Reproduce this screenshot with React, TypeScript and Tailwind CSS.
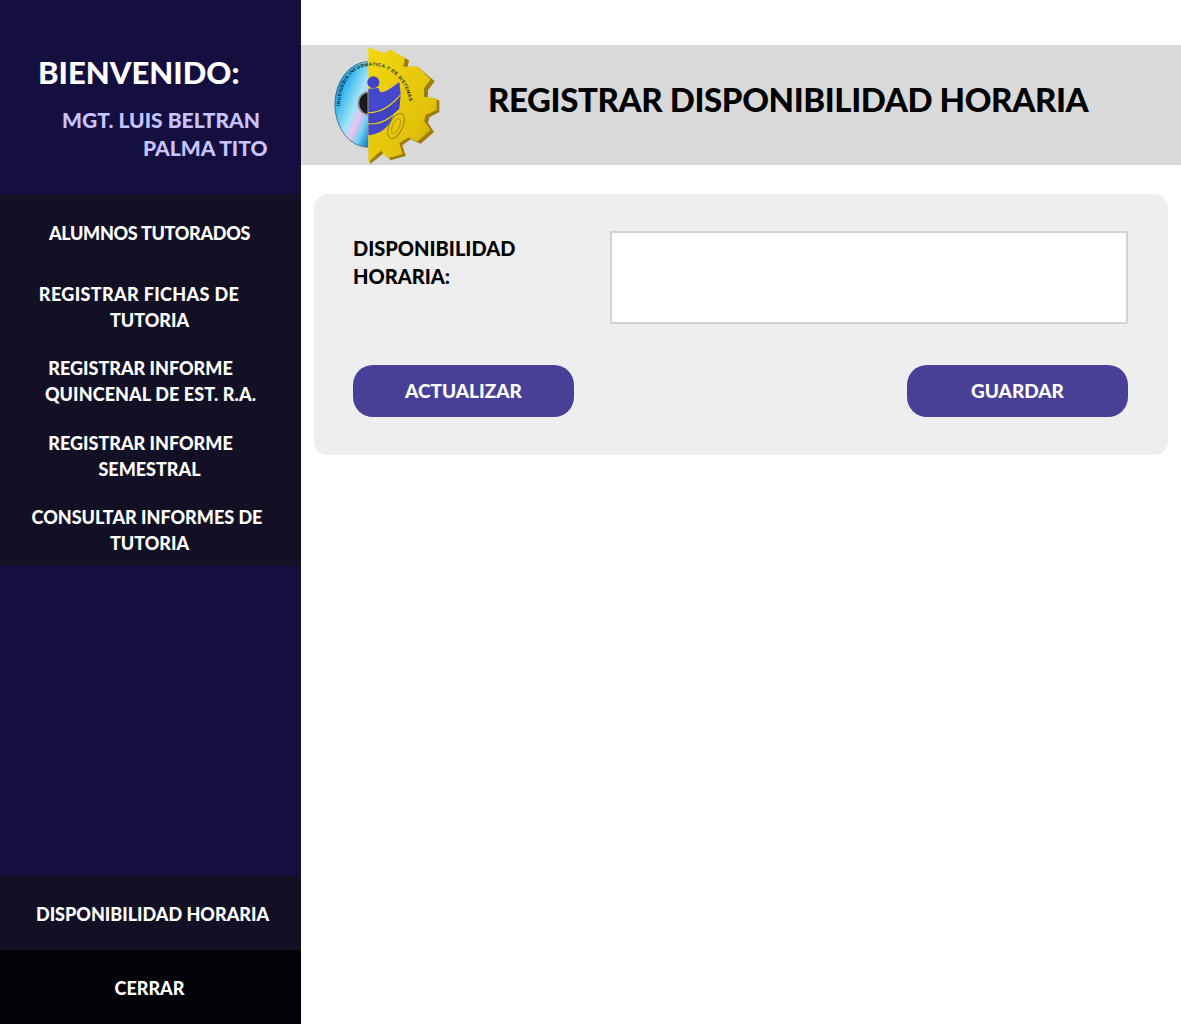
import React from 'react';

const menuItems = [
  { lines: [{ text: 'ALUMNOS TUTORADOS', cls: 'pr-[2px] tracking-[-0.3px]' }] },
  { lines: [{ text: 'REGISTRAR FICHAS DE', cls: 'pr-[23px] tracking-[0.35px]' }, { text: 'TUTORIA', cls: 'pr-[2px]' }] },
  { lines: [{ text: 'REGISTRAR INFORME', cls: 'pr-[20px]' }, { text: 'QUINCENAL DE EST. R.A.', cls: 'pr-0 tracking-[0.1px]' }] },
  { lines: [{ text: 'REGISTRAR INFORME', cls: 'pr-[20px]' }, { text: 'SEMESTRAL', cls: 'pr-[2px]' }] },
  { lines: [{ text: 'CONSULTAR INFORMES DE', cls: 'pr-[7px]' }, { text: 'TUTORIA', cls: 'pr-[2px]' }] },
];

const Logo = () => (
  <svg width="160" height="120" viewBox="0 45 480 360" className="shrink-0">
    <defs>
      <linearGradient id="cd" x1="0" y1="0" x2="0.9" y2="1">
        <stop offset="0" stopColor="#1566c0" />
        <stop offset="0.3" stopColor="#2fb4ea" />
        <stop offset="0.58" stopColor="#9fe4f8" />
        <stop offset="0.72" stopColor="#ecc0f0" />
        <stop offset="0.85" stopColor="#6fd0f2" />
        <stop offset="1" stopColor="#1f86d2" />
      </linearGradient>
      <linearGradient id="gear" x1="0" y1="0" x2="1" y2="1">
        <stop offset="0" stopColor="#f2d80e" />
        <stop offset="0.7" stopColor="#e2c20b" />
        <stop offset="1" stopColor="#c49c08" />
      </linearGradient>
      <path id="ring" d="M90 228 C94 150 130 110 185 107 C240 107 292 150 300 228" />
    </defs>
    {/* CD half */}
    <path d="M175 95 A100 128 0 0 0 175 352 Z" fill="url(#cd)" />
    <path d="M175 95 A100 128 0 0 0 175 352" fill="none" stroke="#24506e" strokeWidth="2" />
    <path d="M175 186 A30 34 0 0 0 175 254 Z" fill="#1a1a1a" stroke="#8f9aa0" strokeWidth="5" />
    {/* gear half */}
    <polygon
      points="185,58 232,76 247,64 297,91 292,118 327,114 374,154 354,181 354,206 388,211 388,246 359,261 354,278 372,306 332,341 302,328 277,346 287,378 242,391 222,368 207,381 180,402"
      fill="#9c7c0a"
    />
    <polygon
      points="175,52 225,70 240,58 285,85 280,110 320,108 362,148 342,175 342,200 380,205 380,240 347,255 342,272 362,300 322,335 295,322 268,340 278,372 233,385 213,362 198,375 175,398"
      fill="url(#gear)"
    />
    {/* ring lettering */}
    <text fontFamily="'Liberation Sans', sans-serif" fontSize="14" fontWeight="700" fill="#1c2430">
      <textPath href="#ring" textLength="340" lengthAdjust="spacing">INGENIERIA INFORMATICA Y DE SISTEMAS</textPath>
    </text>
    {/* blue swooshes */}
    <circle cx="190" cy="157" r="18" fill="#4243c8" />
    <path d="M175 176 L206 174 C208 194 222 192 268 156 L272 192 C240 226 218 244 175 247 Z" fill="#4448cc" />
    <path d="M175 250 C218 250 248 226 272 196 L268 236 C238 266 208 282 175 280 Z" fill="#3f42c4" />
    <path d="M175 283 C208 286 232 274 250 256 C238 294 208 314 175 316 Z" fill="#4448cc" />
    {/* hand mark */}
    <ellipse cx="258" cy="288" rx="20" ry="40" transform="rotate(25 258 288)" fill="none" stroke="#9a8210" strokeWidth="3" />
    <ellipse cx="258" cy="288" rx="10" ry="24" transform="rotate(25 258 288)" fill="none" stroke="#9a8210" strokeWidth="2" />
  </svg>
);

export default function App() {
  return (
    <div className="flex min-h-[1024px] bg-white font-['Lato',sans-serif] font-black">
      {/* sidebar */}
      <aside className="w-[301px] h-[1024px] shrink-0 flex flex-col bg-[#150f3f] text-white">
        <div className="h-[194px] shrink-0 pt-[49px]">
          <h2 className="pl-[38px] text-[31px] leading-[46px]">BIENVENIDO:</h2>
          <div className="mt-[11px] text-[#c6c3ff] text-[21px] leading-[28px]">
            <div className="pl-[62px]">MGT. LUIS BELTRAN</div>
            <div className="pl-[143px]">PALMA TITO</div>
          </div>
        </div>

        <nav className="h-[372px] shrink-0 flex flex-col bg-[#131026]">
          {menuItems.map((item, i) => (
            <a key={i} className="h-[74.4px] pt-[3px] flex flex-col items-center justify-center text-[18px] leading-[26px]">
              {item.lines.map((line) => (
                <span key={line.text} className={line.cls}>{line.text}</span>
              ))}
            </a>
          ))}
        </nav>

        <div className="flex-1" />

        <a className="h-[74px] pt-[2px] flex items-center justify-center bg-[#131026] text-[18px] pl-[4px]">DISPONIBILIDAD HORARIA</a>
        <a className="h-[74px] pt-[2px] flex items-center justify-center bg-[#020208] text-[18px] pr-[2px]">CERRAR</a>
      </aside>

      {/* main */}
      <main className="flex-1 pt-[45px]">
        <header className="h-[120px] flex items-center bg-[#d9d9d9] pl-[9px]">
          <Logo />
          <h1 className="ml-[18px] pb-[10px] text-[33px] tracking-[-0.4px] text-black whitespace-nowrap">REGISTRAR DISPONIBILIDAD HORARIA</h1>
        </header>

        <section className="mt-[29px] ml-[13px] mr-[13px] h-[261px] rounded-[14px] bg-[#eeeeee] pt-[37px] pl-[39px] pr-[40px]">
          <div className="flex">
            <label className="w-[257px] shrink-0 pt-[3px] text-[20px] leading-[28px] text-black">
              DISPONIBILIDAD
              <br />
              HORARIA:
            </label>
            <textarea className="flex-1 h-[93px] bg-white border-2 border-[#d2d2d2] resize-none" />
          </div>
          <div className="mt-[41px] flex justify-between">
            <button className="w-[221px] h-[52px] rounded-[20px] bg-[#483f96] text-white text-[19px]">ACTUALIZAR</button>
            <button className="w-[221px] h-[52px] rounded-[20px] bg-[#483f96] text-white text-[19px]">GUARDAR</button>
          </div>
        </section>
      </main>
    </div>
  );
}
